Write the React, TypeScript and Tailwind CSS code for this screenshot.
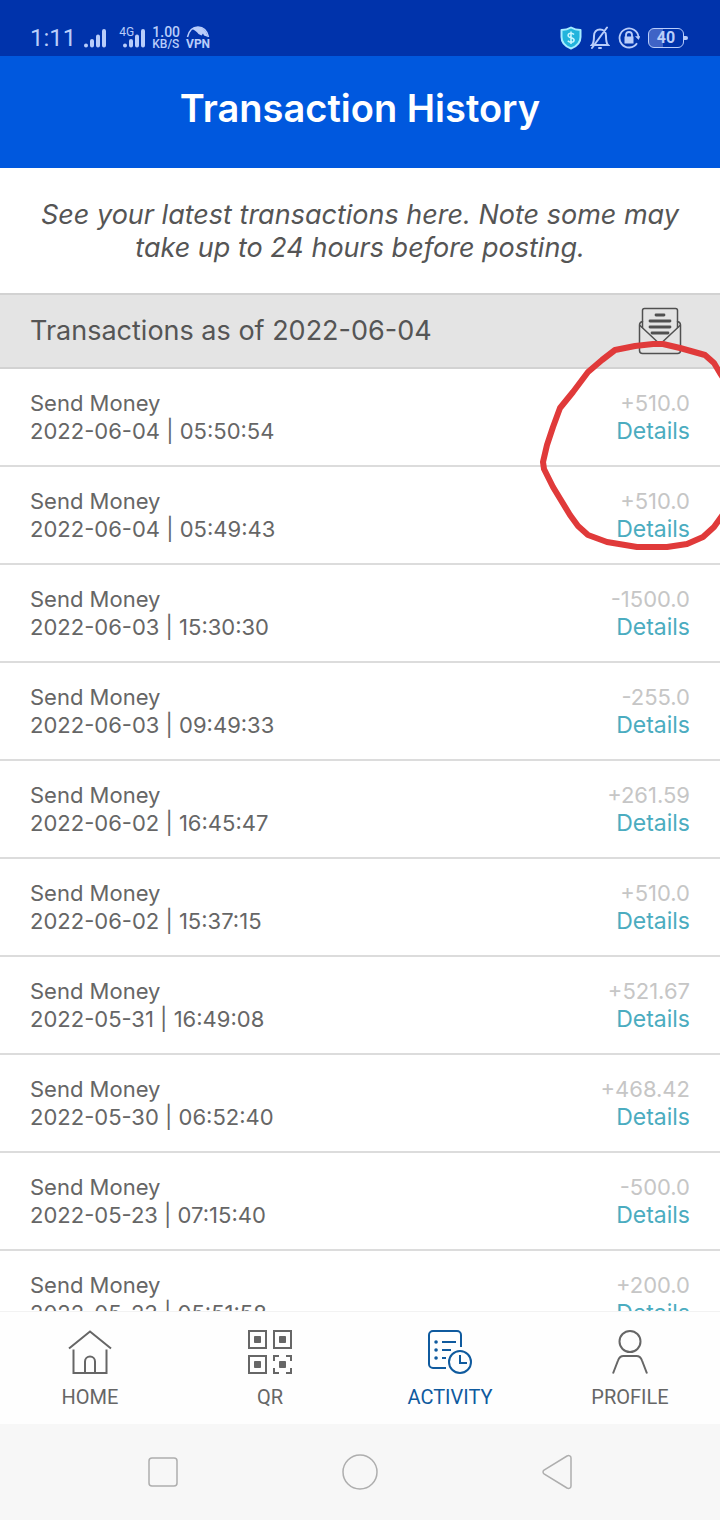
const transactions = [
  { date: '2022-06-04', time: '05:50:54', amount: '+510.0' },
  { date: '2022-06-04', time: '05:49:43', amount: '+510.0' },
  { date: '2022-06-03', time: '15:30:30', amount: '-1500.0' },
  { date: '2022-06-03', time: '09:49:33', amount: '-255.0' },
  { date: '2022-06-02', time: '16:45:47', amount: '+261.59' },
  { date: '2022-06-02', time: '15:37:15', amount: '+510.0' },
  { date: '2022-05-31', time: '16:49:08', amount: '+521.67' },
  { date: '2022-05-30', time: '06:52:40', amount: '+468.42' },
  { date: '2022-05-23', time: '07:15:40', amount: '-500.0' },
  { date: '2022-05-23', time: '05:51:58', amount: '+200.0' },
]

const SignalIcon = () => (
  <svg width="23" height="20" viewBox="0 0 23 20" stroke="currentColor" strokeWidth="4" strokeLinecap="round">
    <path d="M2 17.500v.1M8 13v4.500M14 8.500v9M20 3v14.500" />
  </svg>
)

const VpnIcon = () => (
  <svg width="24" height="12" viewBox="0 0 24 12" fill="none">
    <path d="M1.500 11C3 4.500 7 1 12 1s9 3.500 10.500 10" stroke="currentColor" strokeWidth="1.500" />
    <path d="M6 3c4-3.500 11-2 14 3l2 5-4-1.500-1-2-1.500 2-3-1.500C11 5.500 9 4.500 6 3z" fill="currentColor" />
  </svg>
)

const ShieldIcon = () => (
  <svg width="22" height="24" viewBox="0 0 22 24" fill="none">
    <path d="M11 1.500c3 1.800 6 2.500 9.500 2.500v7c0 6-4 9.500-9.500 11.500C5.500 20.500 1.500 17 1.500 11V4C5 4 8 3.300 11 1.500z" fill="#22b4dc" stroke="#a6ecff" strokeWidth="2" strokeLinejoin="round" />
    <path d="M14 8.500c-.8-1-1.800-1.300-3-1.300-1.700 0-2.900.8-2.900 2.200 0 3.200 6 1.500 6 4.600 0 1.500-1.300 2.300-3.100 2.300-1.300 0-2.500-.5-3.200-1.500M11 5.500v12.500" stroke="#c9f6ff" strokeWidth="1.500" />
  </svg>
)

const BellOffIcon = () => (
  <svg width="20" height="24" viewBox="0 0 20 24" fill="none" stroke="currentColor" strokeWidth="2" strokeLinecap="round">
    <path d="M2 19h16c-1.500-1.500-2-3.500-2-9 0-4-2.500-6.500-6-6.500S4 6 4 10c0 5.500-.5 7.500-2 9zM9 22h2M17 1.500L2 22" />
  </svg>
)

const RotationLockIcon = () => (
  <svg width="22" height="22" viewBox="0 0 22 22" fill="none" stroke="currentColor" strokeWidth="1.800">
    <path d="M20.500 10A9.500 9.500 0 1 0 19 16.200" />
    <path d="M17.500 9.500h4.500l-1.500 3z" fill="currentColor" strokeWidth="0.500" />
    <path d="M8 10V8a3 3 0 0 1 6 0v2" />
    <rect x="7" y="10" width="8" height="6" fill="currentColor" strokeWidth="1" />
  </svg>
)

const MailIcon = () => (
  <svg width="44" height="48" viewBox="0 0 44 48" fill="none" stroke="#505050" strokeWidth="1.500" strokeLinecap="round" strokeLinejoin="round">
    <path d="M4.500 20.500V3.500a2 2 0 0 1 2-2h31a2 2 0 0 1 2 2v17" />
    <path d="M4.500 14.500C2.500 15 1.500 16.500 1.500 18v25.500a3 3 0 0 0 3 3h35a3 3 0 0 0 3-3V18c0-1.500-1-3-3-3.500" />
    <path d="M2 18.500l16.500 15.500c2 1.700 5 1.700 7 0L42 18.500" />
    <path d="M18 8h8M12 14h20M12 20h20M14 26h16" strokeWidth="2.800" />
  </svg>
)

const HomeIcon = () => (
  <svg width="44" height="44" viewBox="0 0 44 44" fill="none" stroke="currentColor" strokeWidth="2">
    <path d="M1 18.500L22 1.500l21 17M5.500 19.500V43h33V19.500" />
    <path d="M17 43V31.500a5 5 0 0 1 10 0V43" />
  </svg>
)

const QrIcon = () => (
  <svg width="44" height="44" viewBox="0 0 44 44" fill="none" stroke="currentColor" strokeWidth="2">
    <path d="M1 1h17v17H1zM26 1h17v17H26zM1 26h17v17H1z" />
    <path d="M26 31v-5h5M38 26h5v5M43 38v5h-5M31 43h-5v-5" />
    <path d="M6.500 6.500h6v6h-6zM31.500 6.500h6v6h-6zM6.500 31.500h6v6h-6zM31.500 31.500h6v6h-6z" fill="currentColor" strokeWidth="1" />
  </svg>
)

const ActivityIcon = () => (
  <svg width="44" height="44" viewBox="0 0 44 44" fill="none" stroke="currentColor" strokeWidth="2">
    <path d="M33 17V5a4 4 0 0 0-4-4H5a4 4 0 0 0-4 4v29a4 4 0 0 0 4 4h13" />
    <path d="M14 12h14M14 20h9M14 28h4" />
    <path d="M8 12h.1M8 20h.1M8 28h.1" strokeWidth="3.500" strokeLinecap="round" />
    <circle cx="32" cy="32" r="11" />
    <path d="M32 25v8h7" />
  </svg>
)

const ProfileIcon = () => (
  <svg width="44" height="44" viewBox="0 0 44 44" fill="none" stroke="currentColor" strokeWidth="2">
    <circle cx="22" cy="11.500" r="10.500" />
    <path d="M5 43.500l5-13c1-3 2.500-4.500 5.500-4.500h13c3 0 4.500 1.500 5.500 4.500l5 13" />
  </svg>
)

const tabs = [
  { label: 'HOME', icon: <HomeIcon />, active: false },
  { label: 'QR', icon: <QrIcon />, active: false },
  { label: 'ACTIVITY', icon: <ActivityIcon />, active: true },
  { label: 'PROFILE', icon: <ProfileIcon />, active: false },
]

const StatusBar = () => (
  <div className="flex h-14 shrink-0 items-end justify-between bg-[#0033ab] pr-8 pb-1 pl-[30px] font-['Roboto',sans-serif] text-[#b9cdfa]">
    <div className="flex h-7 items-center gap-2">
      <span className="text-2xl">1:11</span>
      <SignalIcon />
      <div className="flex items-center gap-1.5">
        <div className="relative pl-2">
          <span className="absolute -top-1 left-1 text-xs">4G</span>
          <SignalIcon />
        </div>
        <div className="leading-3 font-medium">
          <div className="text-sm leading-3">1.00</div>
          <div className="text-xs leading-3">KB/S</div>
        </div>
        <div className="flex flex-col items-center text-xs leading-3 font-bold">
          <VpnIcon />
          VPN
        </div>
      </div>
    </div>
    <div className="flex h-7 items-center gap-2">
      <ShieldIcon />
      <BellOffIcon />
      <RotationLockIcon />
      <div className="flex items-center">
        <div className="flex h-5 w-9 items-center justify-center rounded-md border border-current bg-linear-to-r from-[#3f63c6] from-40% to-transparent to-40% text-base font-bold">
          40
        </div>
        <div className="h-1 w-1 rounded-r-full bg-current" />
      </div>
    </div>
  </div>
)

const TransactionList = () => (
  <ul>
    {transactions.map((item) => (
      <li
        key={item.date + item.time}
        className="flex justify-between border-b-2 border-[#dcdcdc] px-[30px] py-5 text-[22px] leading-7"
      >
        <div className="text-[#666]">
          <p>Send Money</p>
          <p>
            {item.date} | {item.time}
          </p>
        </div>
        <div className="flex flex-col items-end">
          <p className="text-[#c6c6c6]">{item.amount}</p>
          <a href="#details" className="text-[23px] text-[#4bacc0]">
            Details
          </a>
        </div>
      </li>
    ))}
  </ul>
)

// hand-drawn ring around the two newest entries
const RedCircle = () => (
  <svg
    className="pointer-events-none absolute top-12 right-0 overflow-visible"
    width="180"
    height="212"
    viewBox="0 0 180 212"
    fill="none"
    stroke="#e03a3a"
    strokeWidth="6"
    strokeLinecap="round"
    strokeLinejoin="round"
  >
    <path d="M184 38L180 32L174 22L165 14L140 7L123 3H113L95 5L75 9L62 19L48 31L33 51L20 67L13 86L7 104L3 121L4 128L13 146L30 174L38 185L48 194L67 201L97 206H127L147 203L163 196L174 186L184 172" />
  </svg>
)

export default function App() {
  return (
    <div className="flex h-screen flex-col bg-white font-['Inter','Liberation_Sans',sans-serif]">
      <StatusBar />
      <header className="flex h-28 shrink-0 items-start justify-center bg-[#0058de] pt-8">
        <h1 className="text-[38px] leading-10 font-semibold text-white">Transaction History</h1>
      </header>

      <main className="min-h-0 flex-1 overflow-hidden">
        <p className="px-8 pt-[30px] pb-[29px] text-center text-[27px] leading-[33px] text-[#555] italic">
          See your latest transactions here. Note some may take up to 24 hours before posting.
        </p>
        <section className="relative">
          <div className="flex h-[76px] items-center justify-between border-y-2 border-[#d2d2d2] bg-[#e4e4e4] pr-[38px] pl-[30px]">
            <h2 className="text-[27px] text-[#555]">Transactions as of 2022-06-04</h2>
            <button type="button" aria-label="Email statement">
              <MailIcon />
            </button>
          </div>
          <TransactionList />
          <RedCircle />
        </section>
      </main>

      <nav className="grid shrink-0 grid-cols-4 border-t border-[#f2f2f2] bg-[#fefefe] pt-[18px] pb-3 font-['Roboto',sans-serif]">
        {tabs.map((tab) => (
          <a
            key={tab.label}
            href={`#${tab.label.toLowerCase()}`}
            className={`flex flex-col items-center gap-2 text-xl leading-[30px] ${tab.active ? 'text-[#0f5a9e]' : 'text-[#666]'}`}
          >
            {tab.icon}
            {tab.label}
          </a>
        ))}
      </nav>

      <div className="grid h-24 shrink-0 grid-cols-3 place-items-center bg-[#f7f7f7] px-16 text-[#aeaeae]">
        <button type="button" aria-label="Recent apps">
          <svg width="30" height="30" viewBox="0 0 30 30" fill="none" stroke="currentColor" strokeWidth="1.500">
            <rect x="1" y="1" width="28" height="28" rx="3" />
          </svg>
        </button>
        <button type="button" aria-label="Home screen">
          <svg width="36" height="36" viewBox="0 0 36 36" fill="none" stroke="currentColor" strokeWidth="1.500">
            <circle cx="18" cy="18" r="17" />
          </svg>
        </button>
        <button type="button" aria-label="Back">
          <svg width="30" height="36" viewBox="0 0 30 36" fill="none" stroke="currentColor" strokeWidth="1.500">
            <path d="M2 16.200L25 2c2-1 4 0 4 2v28c0 2-2 3-4 2L2 19.800c-1.300-1-1.300-2.600 0-3.600z" />
          </svg>
        </button>
      </div>
    </div>
  )
}
